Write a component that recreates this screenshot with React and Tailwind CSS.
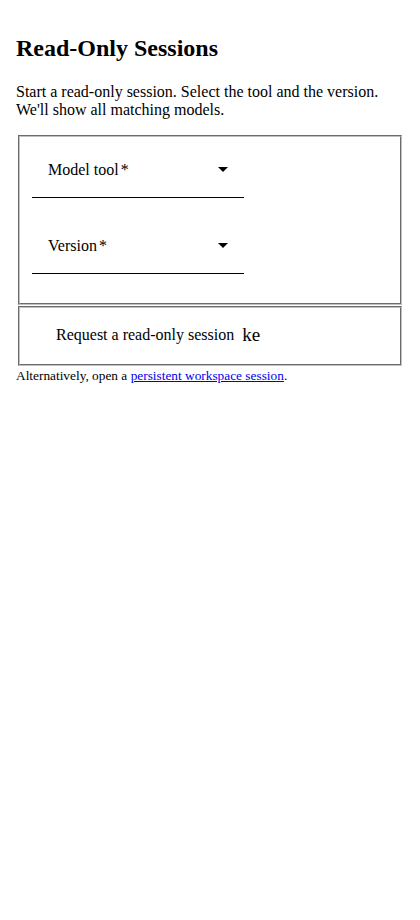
import React from "react";

const Caret = () => (
  <svg width="10" height="5" viewBox="0 0 10 5" className="shrink-0">
    <path d="M0 0 L10 0 L5 5 Z" fill="#000" />
  </svg>
);

const SelectField = ({ label }) => (
  <div className="w-[212px] h-[56px] border-b border-black flex items-center justify-between pl-4 pr-[16px]">
    <span className="text-[16px]">
      {label}
      <span className="ml-[2px]">*</span>
    </span>
    <Caret />
  </div>
);

const App = () => {
  return (
    <div className="min-h-[920px] bg-white text-black px-4 pt-[35px] font-['Liberation_Serif',serif]">
      {/* Title */}
      <h2 className="text-[24px] font-bold leading-[27.6px]">Read-Only Sessions</h2>
      <p className="mt-5 text-[16px] leading-[18.4px]">
        Start a read-only session. Select the tool and the version. We'll show all matching models.
      </p>

      {/* Selects */}
      <div className="mt-4 mx-[2px] border-2 [border-style:groove] border-[#c0c0c0] px-3 pt-[5px] pb-[10px]">
        <SelectField label="Model tool" />
        <div className="mt-5">
          <SelectField label="Version" />
        </div>
        <div className="h-[19px]" />
      </div>

      {/* Request button */}
      <div className="mx-[2px] mt-px h-[60px] border-2 [border-style:groove] border-[#c0c0c0] flex items-center pl-[36px] pb-[3px]">
        <span className="text-[16px]">Request a read-only session</span>
        <span className="ml-2 text-[19px] leading-none">ke</span>
      </div>

      <p className="mt-[2px] text-[13.33px] leading-[15.3px]">
        Alternatively, open a{" "}
        <a href="#" className="text-[#0000ee] underline">
          persistent workspace session
        </a>
        .
      </p>
    </div>
  );
};

export default App;
